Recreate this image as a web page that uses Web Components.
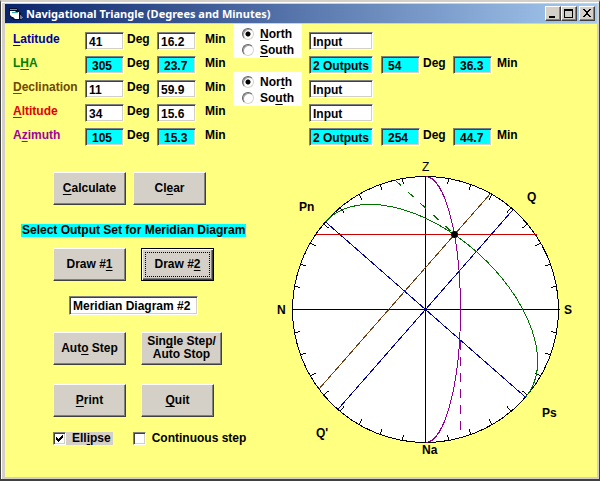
<!DOCTYPE html>
<html lang="en">
<head>
<meta charset="utf-8">
<title>Navigational Triangle</title>
<style>
  html, body { margin: 0; min-height: 100vh; }
  body {
    display: flex;
    font: bold 12px/14px "Liberation Sans", Arial, sans-serif;
    color: #000;
    text-decoration-skip-ink: none;
    text-underline-offset: 2px;
    background: #d4d0c8;
  }
</style>
</head>
<body>
<nav-app></nav-app>

<script>
const define = (name, html, setup) => {
  const template = document.createElement('template');
  template.innerHTML = html;
  customElements.define(name, class extends HTMLElement {
    connectedCallback() {
      if (this.shadowRoot) return;
      this.attachShadow({ mode: 'open' }).append(template.content.cloneNode(true));
      if (setup) setup(this, this.shadowRoot);
    }
  });
};

/* Sunken text box shared by every row component */
const fieldCss = `
  input {
    box-sizing: border-box; height: 18px; width: 100%; min-width: 0; margin: 0;
    padding: 1px 0 0 3px; font: inherit; color: #000; background: #fff;
    border: 1px solid; border-color: #808080 #fff #fff #808080;
    box-shadow: inset 1px 1px #404040, inset -1px -1px #d4d0c8; border-radius: 0; outline: 0;
  }
  input[readonly] { background: #0ff; padding-left: 6px; }
  input.wide { padding-left: 3px; }
`;

define('title-bar', `
  <style>
    :host { display: flex; align-items: center; height: 19px; padding: 0 2px 0 4px;
      background: linear-gradient(to right, #0a246a, #a6caf0); color: #fff; }
    svg.logo { width: 14px; height: 14px; margin-right: 3px; }
    h1 { flex: 1; margin: 0; font: bold 11px/14px "Noto Sans", "Open Sans", sans-serif; white-space: nowrap; }
    button { box-sizing: border-box; width: 16px; height: 15px; padding: 0; border: 1px solid;
      border-color: #fff #404040 #404040 #fff; box-shadow: inset -1px -1px #808080;
      background: #d4d0c8; display: flex; }
    button:last-child { margin-left: 2px; }
    button svg { width: 14px; height: 13px; }
  </style>
  <svg class="logo" viewBox="0 0 14 14" aria-hidden="true">
    <path d="M0 1h8l2 3v1l2 1v7H5l-4-3z" fill="#051030"/>
    <path d="M1 2h7v1H1z" fill="#30b0a8"/>
    <path d="M1 4h5l1 1h3v5H3L1 8z" fill="#fff"/>
    <path d="M3 5h6v1H3z" fill="#30b0a8"/>
    <path d="M4 7l6 1v4H6l-2-2z" fill="#fff"/>
    <path d="M11 8h1v1h1v1h1v1h-1v1h-2z" fill="#777c88"/>
  </svg>
  <h1><slot></slot></h1>
  <button aria-label="Minimize"><svg viewBox="0 0 14 13" shape-rendering="crispEdges"><path d="M3 9h6v2H3z"/></svg></button>
  <button aria-label="Maximize"><svg viewBox="0 0 14 13" shape-rendering="crispEdges"><path d="M2 2h9v9H2zM3 4v6h7V4z" fill-rule="evenodd"/></svg></button>
  <button aria-label="Close"><svg viewBox="0 0 14 13" shape-rendering="crispEdges"><path d="M3 2h2v1h1v1h2V3h1V2h2v1h-1v1H9v1H8v2h1v1h1v1h1v1H9V9H8V8H6v1H5v1H3V9h1V8h1V7h1V5H5V4H4V3H3z"/></svg></button>
`);

define('angle-row', `
  <style>
    :host { display: grid; grid-template-columns: 72px 39px 33px 39px 37px; height: 24px; }
    ${fieldCss}
    .unit { color: #000; padding-left: 3px; }
    .min { display: contents; color: #000; }
    .min span { padding-left: 9px; }
  </style>
  <label for="deg"><slot></slot></label>
  <input id="deg"><span class="unit">Deg</span>
  <label class="min"><input id="min"><span>Min</span></label>
`, (host, root) => {
  for (const id of ['deg', 'min']) {
    const input = root.getElementById(id);
    input.value = host.getAttribute(id);
    input.readOnly = host.hasAttribute('output');
  }
});

define('result-row', `
  <style>
    :host { display: grid; grid-template-columns: 64px 8px 39px 33px 39px 1fr; height: 24px; }
    ${fieldCss}
    #kind { grid-column: 1; }
    #deg { grid-column: 3; }
    .unit { padding-left: 3px; }
    .min { display: contents; }
    .min span { padding-left: 5px; }
    :host(:not([deg])) :is(#deg, .unit, .min) { display: none; }
  </style>
  <input id="kind" class="wide" aria-label="Row kind">
  <input id="deg" aria-label="Degrees" readonly><span class="unit">Deg</span>
  <label class="min"><input id="min" readonly><span>Min</span></label>
`, (host, root) => {
  const kind = root.getElementById('kind');
  kind.value = host.getAttribute('kind');
  kind.readOnly = host.hasAttribute('deg');
  root.getElementById('deg').value = host.getAttribute('deg') || '';
  root.getElementById('min').value = host.getAttribute('min') || '';
});

define('hemisphere-choice', `
  <style>
    :host { display: block; background: #fff; padding: 2px 0 0 9px; height: 32px; }
    label { display: flex; align-items: center; height: 16px; gap: 6px; }
    input { appearance: none; box-sizing: border-box; width: 12px; height: 12px; margin: 0; border-radius: 50%;
      border: 1px solid; border-color: #606060 #d8d4cc #d8d4cc #606060;
      box-shadow: inset 1px 1px #a0a0a0;
      background: #fff; }
    input:checked { background: radial-gradient(circle, #000 0 2px, #fff 3px); }
  </style>
  <label><input type="radio" name="side" checked><span><slot name="north"></slot></span></label>
  <label><input type="radio" name="side"><span><slot name="south"></slot></span></label>
`);

define('push-button', `
  <style>
    :host { display: block; width: 73px; }
    :host([wide]) { width: 81px; }
    button { box-sizing: border-box; width: 100%; height: 33px; padding: 0 0 1px; font: inherit; line-height: 13px;
      color: #000; background: #d4d0c8; border: 1px solid; border-color: #fff #404040 #404040 #fff;
      box-shadow: inset -1px -1px #808080; border-radius: 0; white-space: nowrap;
      text-decoration-skip-ink: none; }
    :host([default]) button { border-color: #000; box-shadow: inset 1px 1px #fff, inset -1px -1px #404040, inset -2px -2px #808080;
      outline: 1px dotted #000; outline-offset: -5px; }
  </style>
  <button type="button"><slot></slot></button>
`);

define('check-option', `
  <style>
    :host { display: block; }
    label { display: flex; align-items: center; height: 13px; }
    input { appearance: none; box-sizing: border-box; width: 13px; height: 13px; margin: 0; background: #fff;
      border: 1px solid; border-color: #808080 #fff #fff #808080;
      box-shadow: inset 1px 1px #404040, inset -1px -1px #d4d0c8; }
    .box { display: grid; }
    .box > * { grid-area: 1 / 1; }
    svg { width: 13px; height: 13px; pointer-events: none; visibility: hidden; }
    :host([checked]) svg { visibility: visible; }
    .text { line-height: 13px; padding: 0 2px 0 6px; }
    :host([checked]) .text { background: #d4d0c8; }
  </style>
  <label><span class="box"><input type="checkbox">
    <svg viewBox="0 0 13 13" shape-rendering="crispEdges"><path d="M3 5h1v1h1v1h1V6h1V5h1V4h1V3h1v3H9v1H8v1H7v1H6v1H5V9H4V8H3z"/></svg></span>
    <span class="text"><slot></slot></span></label>
`, (host, root) => { root.querySelector('input').checked = host.hasAttribute('checked'); });

define('caption-field', `
  <style>
    :host { display: block; width: 129px; }
    ${fieldCss}
    input { height: 19px; }
  </style>
  <input aria-label="Diagram title">
`, (host, root) => { root.querySelector('input').value = host.getAttribute('value'); });

define('meridian-diagram', `
  <style>
    :host { display: block; }
    svg { display: block; width: 100%; font: inherit; }
  </style>
  <svg viewBox="270 152 327 318" role="img" aria-label="Meridian diagram">
    <g shape-rendering="crispEdges" fill="none" stroke="#000">
      <circle cx="425.5" cy="309.5" r="133" fill="#fff"/>
      <g id="ticks"></g>
      <path d="M425.5 176.5v266M292.5 309.5h267"/>
      <path stroke="#0000a0" d="M325.5 221.8L525.5 397.2M513.2 209.5L337.8 409.5"/>
      <path stroke="#704010" d="M490.5 193.5L319 389"/>
      <path stroke="#c80000" d="M315.5 234.5h221"/>
      <path stroke="#007000" d="M325.5 221.8A133 77 41.27 0 1 525.5 397.2"/>
      <path stroke="#007000" stroke-dasharray="8 9" d="M395 180L454 234"/>
      <path stroke="#900090" d="M425.5 176.5A35 133 0 0 1 425.5 442.5"/>
      <path stroke="#900090" stroke-dasharray="9 7" d="M460.5 341V438"/>
    </g>
    <circle cx="454.5" cy="234.5" r="3.5"/>
    <circle cx="425.5" cy="309.5" r="1.5" fill="#000060"/>
    <g>
      <text x="422" y="171" font-weight="normal">Z</text>
      <text x="299" y="211">Pn</text><text x="527" y="201">Q</text>
      <text x="277" y="314">N</text><text x="564" y="314">S</text>
      <text x="316" y="437">Q'</text><text x="542" y="417">Ps</text>
      <text x="422" y="454">Na</text>
    </g>
  </svg>
`, (host, root) => {
  const g = root.getElementById('ticks');
  for (let a = 10; a < 360; a += 10) {
    if (a % 90 === 0) continue;
    const r = a * Math.PI / 180, line = document.createElementNS('http://www.w3.org/2000/svg', 'line');
    const at = d => [425.5 + d * Math.cos(r), 309.5 + d * Math.sin(r)];
    const [x1, y1] = at(133), [x2, y2] = at(127);
    Object.entries({ x1, y1, x2, y2 }).forEach(([k, v]) => line.setAttribute(k, v));
    g.append(line);
  }
});

define('nav-app', `
  <style>
    :host { flex: 1; display: flex; flex-direction: column; box-sizing: border-box;
      padding: 2px 2px 2px 4px; border: solid; border-width: 2px 1px 2px 1px;
      border-color: #d4d0c8 #404040 #404040 #404040;
      box-shadow: inset 1px 1px #fff; background: #d4d0c8; }
    main { flex: 1; margin-top: 1px; background: #ffff80; }
    .data { display: flex; padding-left: 8px; }
    .rows { padding-top: 8px; }
    .choices { display: flex; flex-direction: column; gap: 14px; width: 69px; margin-right: 7px; }
    .results { flex: 1; }
    .lower { display: grid; grid-template-columns: 265px 1fr; align-items: start; }
    .controls { display: flex; flex-direction: column; align-items: flex-start; padding: 20px 0 0 48px; }
    .pair { display: flex; gap: 15px; }
    .pair.close { gap: 7px; }
    .note { margin: 19px 0 11px -32px; padding: 0 1px; line-height: 13px; background: #0ff; white-space: nowrap; }
    caption-field { margin: 15px 0 17px 16px; }
    .last { margin-top: 19px; }
    .checks { display: flex; gap: 20px; margin-top: 15px; }
  </style>
  <title-bar>Navigational Triangle (Degrees and Minutes)</title-bar>
  <main>
    <div class="data">
      <div class="rows">
        <angle-row style="color:#0000a0" deg="41" min="16.2"><u>L</u>atitude</angle-row>
        <angle-row style="color:#008000" deg="305" min="23.7" output>L<u>H</u>A</angle-row>
        <angle-row style="color:#704800" deg="11" min="59.9"><u>D</u>eclination</angle-row>
        <angle-row style="color:#e00000" deg="34" min="15.6"><u>A</u>ltitude</angle-row>
        <angle-row style="color:#a000a0" deg="105" min="15.3" output>A<u>z</u>imuth</angle-row>
      </div>
      <div class="choices">
        <hemisphere-choice><span slot="north"><u>N</u>orth</span><span slot="south"><u>S</u>outh</span></hemisphere-choice>
        <hemisphere-choice><span slot="north">Nor<u>t</u>h</span><span slot="south">So<u>u</u>th</span></hemisphere-choice>
      </div>
      <div class="rows results">
        <result-row kind="Input"></result-row>
        <result-row kind="2 Outputs" deg="54" min="36.3"></result-row>
        <result-row kind="Input"></result-row>
        <result-row kind="Input"></result-row>
        <result-row kind="2 Outputs" deg="254" min="44.7"></result-row>
      </div>
    </div>
    <div class="lower">
      <div class="controls">
        <div class="pair close"><push-button><u>C</u>alculate</push-button><push-button>Cl<u>e</u>ar</push-button></div>
        <div class="note">Select Output Set for Meridian Diagram</div>
        <div class="pair"><push-button>Draw #<u>1</u></push-button><push-button default>Draw #<u>2</u></push-button></div>
        <caption-field value="Meridian Diagram #2"></caption-field>
        <div class="pair"><push-button>Aut<u>o</u> Step</push-button><push-button wide>Sin<u>g</u>le Step/<br>Auto Stop</push-button></div>
        <div class="pair last"><push-button><u>P</u>rint</push-button><push-button><u>Q</u>uit</push-button></div>
        <div class="checks"><check-option checked>Ell<u>i</u>pse</check-option><check-option>Continuous step</check-option></div>
      </div>
      <meridian-diagram></meridian-diagram>
    </div>
  </main>
`);
</script>
</body>
</html>
